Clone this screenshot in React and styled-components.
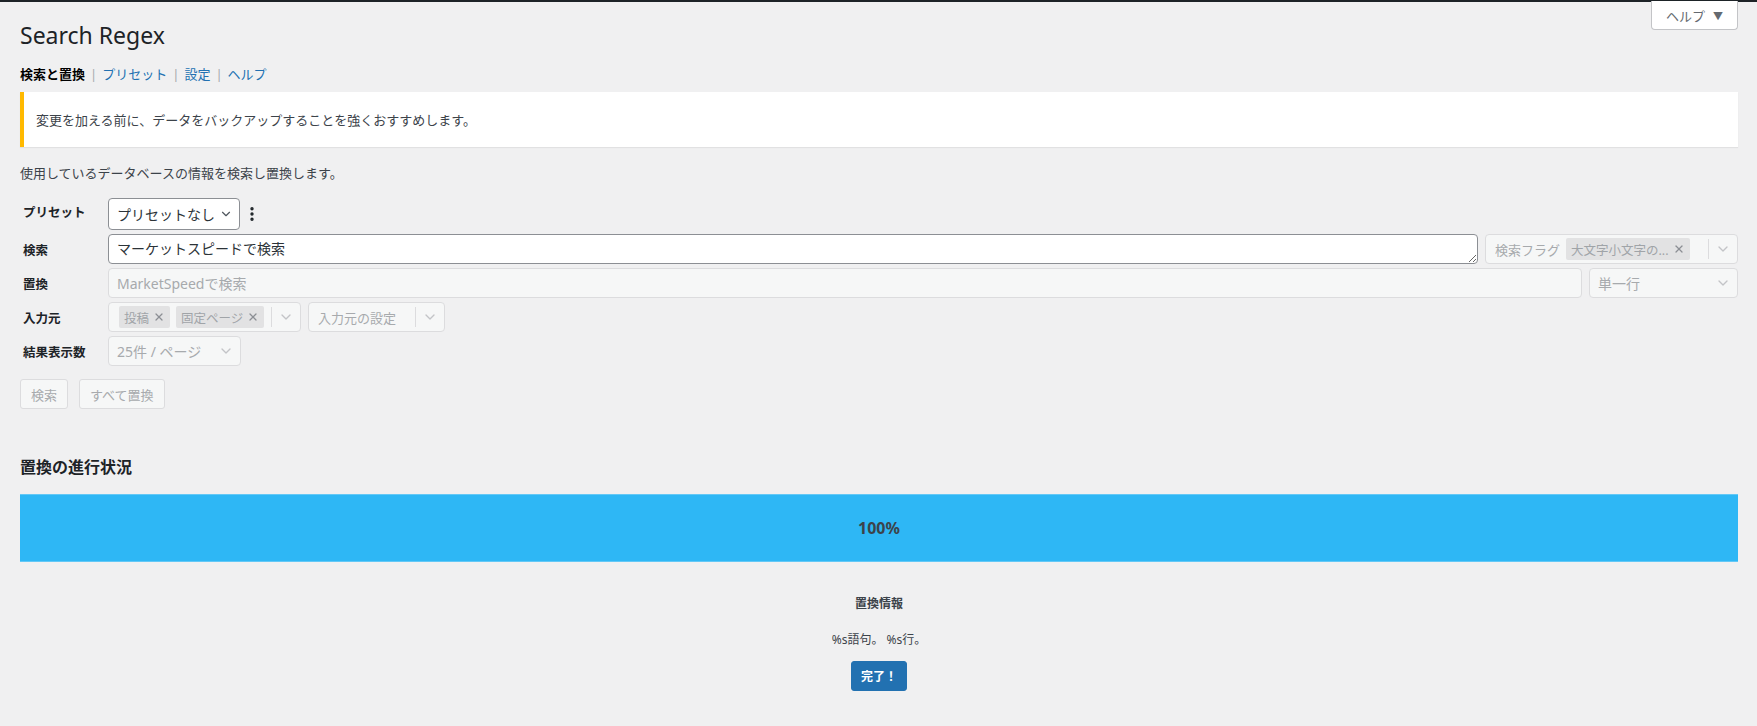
import React from "react";
import styled, { createGlobalStyle } from "styled-components";
import { ChevronDown, X, EllipsisVertical } from "lucide-react";

const GlobalStyle = createGlobalStyle`
  html, body {
    margin: 0;
    padding: 0;
    background: #f0f0f1;
    font-family: "Noto Sans", "Noto Sans CJK JP", sans-serif;
    color: #3c434a;
    font-size: 13px;
  }
  * { box-sizing: border-box; }
`;

const TopBar = styled.div`
  height: 2px;
  background: #1d2327;
`;

const Page = styled.div`
  padding: 0 19px 40px 20px;
`;

const Header = styled.div`
  display: flex;
  justify-content: space-between;
  align-items: flex-start;
`;

const Title = styled.h1`
  margin: 19px 0 0;
  font-size: 23px;
  font-weight: 400;
  line-height: 29px;
  color: #1d2327;
`;

const HelpTab = styled.button`
  display: flex;
  align-items: center;
  justify-content: center;
  gap: 8px;
  height: 29px;
  width: 87px;
  margin-top: -1px;
  padding: 0;
  background: #fff;
  border: 1px solid #c3c4c7;
  border-top: none;
  border-radius: 0 0 4px 4px;
  font-family: inherit;
  font-size: 13px;
  color: #646970;
  white-space: nowrap;
  span.arrow { font-size: 10px; color: #646970; }
`;

const SubNav = styled.div`
  display: flex;
  align-items: center;
  gap: 5px;
  margin-top: 14px;
  line-height: 20px;
  font-size: 13px;
`;

const NavItem = styled.a`
  color: ${(p) => (p.$current ? "#000" : "#2271b1")};
  font-weight: ${(p) => (p.$current ? 600 : 400)};
  text-decoration: none;
`;

const Sep = styled.span`
  color: #a7aaad;
`;

const Notice = styled.div`
  margin-top: 8px;
  height: 55px;
  display: flex;
  align-items: center;
  padding: 0 12px;
  background: #fff;
  border-left: 4px solid #ffb900;
  box-shadow: 0 1px 1px rgba(0, 0, 0, 0.06);
  font-size: 13px;
  color: #3c434a;
`;

const Intro = styled.p`
  margin: 16px 0 0;
  line-height: 20px;
  font-size: 13px;
`;

const Form = styled.div`
  margin-top: 15px;
  display: flex;
  flex-direction: column;
  gap: 4px;
`;

const Row = styled.div`
  display: flex;
  align-items: center;
  gap: 7px;
`;

const Label = styled.div`
  width: 81px;
  padding-left: 3px;
  flex-shrink: 0;
  font-weight: 700;
  font-size: 12.5px;
  color: #1d2327;
  align-self: ${(p) => (p.$top ? "flex-start" : "center")};
  margin-top: ${(p) => (p.$top ? "4px" : "0")};
`;

const Select = styled.div`
  display: flex;
  align-items: center;
  justify-content: space-between;
  height: ${(p) => p.$h || 30}px;
  width: ${(p) => (p.$w ? p.$w + "px" : "auto")};
  padding: 0 6px 0 8px;
  border: 1px solid ${(p) => (p.$active ? "#8c8f94" : "#dcdcde")};
  border-radius: 4px;
  background: ${(p) => (p.$active ? "#fff" : "#f6f7f7")};
  color: ${(p) => (p.$active ? "#2c3338" : "#a7aaad")};
  font-size: 14px;
  white-space: nowrap;
`;

const Kebab = styled.div`
  display: flex;
  align-items: center;
  margin-left: -4px;
  color: #1d2327;
`;

const SearchBox = styled.textarea`
  flex: 1;
  height: 30px;
  min-height: 30px;
  padding: 3px 8px;
  border: 1px solid #8c8f94;
  border-radius: 4px;
  background: #fff;
  color: #2c3338;
  font-family: inherit;
  font-size: 14px;
  line-height: 22px;
  resize: vertical;
  overflow: hidden;
  outline: none;
`;

const Replace = styled.div`
  flex: 1;
  height: 30px;
  display: flex;
  align-items: center;
  padding: 0 8px;
  border: 1px solid #dcdcde;
  border-radius: 4px;
  background: #f6f7f7;
  color: #a7aaad;
  font-size: 14px;
`;

const Multi = styled.div`
  display: flex;
  align-items: center;
  height: 30px;
  width: ${(p) => p.$w}px;
  padding-left: ${(p) => (p.$plain ? 9 : 10)}px;
  border: 1px solid #dcdcde;
  border-radius: 4px;
  background: #f6f7f7;
  color: #a7aaad;
  font-size: 13px;
  white-space: nowrap;
`;

const MultiBody = styled.div`
  flex: 1;
  display: flex;
  align-items: center;
  gap: 6px;
  overflow: hidden;
`;

const Tag = styled.span`
  display: inline-flex;
  align-items: center;
  gap: 4px;
  height: 22px;
  padding: 0 5px;
  border-radius: 2px;
  background: #e2e2e3;
  color: #a0a4a8;
  font-size: 12.5px;
  width: ${(p) => (p.$w ? p.$w + "px" : "auto")};
  justify-content: space-between;
  svg { color: #8c8f94; }
`;

const Divider = styled.span`
  width: 1px;
  height: 20px;
  background: #dcdcde;
`;

const Caret = styled.span`
  width: 28px;
  display: flex;
  justify-content: center;
  color: #c3c4c7;
`;

const Buttons = styled.div`
  display: flex;
  gap: 11px;
  margin-top: 13px;
`;

const GhostButton = styled.button`
  height: 30px;
  padding: 0 10px;
  border: 1px solid #dcdcde;
  border-radius: 3px;
  background: #f6f7f7;
  color: #a7aaad;
  font-family: inherit;
  font-size: 13px;
`;

const SectionTitle = styled.h2`
  margin: 47px 0 0;
  font-size: 16px;
  font-weight: 700;
  line-height: 22px;
  color: #1d2327;
`;

const Progress = styled.div`
  margin-top: 16px;
  height: 68px;
  display: flex;
  align-items: center;
  justify-content: center;
  background: #2eb7f5;
  border-top: 1px solid #63c8f6;
  border-bottom: 1px solid #63c8f6;
  font-size: 16px;
  font-weight: 700;
  color: #3c434a;
`;

const Info = styled.div`
  display: flex;
  flex-direction: column;
  align-items: center;
  margin-top: 33px;
`;

const InfoTitle = styled.div`
  font-weight: 700;
  font-size: 12px;
  line-height: 18px;
  color: #3c434a;
`;

const InfoText = styled.div`
  margin-top: 18px;
  font-size: 12px;
  line-height: 18px;
`;

const PrimaryButton = styled.button`
  margin-top: 12px;
  height: 30px;
  width: 56px;
  border: 1px solid #2271b1;
  border-radius: 3px;
  background: #2271b1;
  color: #fff;
  font-family: inherit;
  font-size: 12px;
  font-weight: 600;
`;

export default function App() {
  return (
    <>
      <GlobalStyle />
      <TopBar />
      <Page>
        <Header>
          <Title>Search Regex</Title>
          <HelpTab>
            ヘルプ <span className="arrow">▼</span>
          </HelpTab>
        </Header>

        <SubNav>
          <NavItem $current>検索と置換</NavItem>
          <Sep>|</Sep>
          <NavItem href="#">プリセット</NavItem>
          <Sep>|</Sep>
          <NavItem href="#">設定</NavItem>
          <Sep>|</Sep>
          <NavItem href="#">ヘルプ</NavItem>
        </SubNav>

        <Notice>変更を加える前に、データをバックアップすることを強くおすすめします。</Notice>

        <Intro>使用しているデータベースの情報を検索し置換します。</Intro>

        <Form>
          <Row>
            <Label $top>プリセット</Label>
            <Select $active $w={132} $h={32}>
              プリセットなし
              <ChevronDown size={14} strokeWidth={2} color="#50575e" />
            </Select>
            <Kebab>
              <EllipsisVertical size={18} strokeWidth={2.5} />
            </Kebab>
          </Row>

          <Row>
            <Label>検索</Label>
            <SearchBox rows={1} defaultValue="マーケットスピードで検索" />
            <Multi $w={253} $plain>
              <MultiBody>
                <span>検索フラグ</span>
                <Tag $w={124}>
                  大文字小文字の...
                  <X size={12} strokeWidth={2.5} />
                </Tag>
              </MultiBody>
              <Divider />
              <Caret>
                <ChevronDown size={16} strokeWidth={2} />
              </Caret>
            </Multi>
          </Row>

          <Row>
            <Label>置換</Label>
            <Replace>MarketSpeedで検索</Replace>
            <Select $w={149}>
              単一行
              <ChevronDown size={16} strokeWidth={2} color="#c3c4c7" />
            </Select>
          </Row>

          <Row>
            <Label>入力元</Label>
            <Multi $w={193}>
              <MultiBody>
                <Tag>
                  投稿 <X size={12} strokeWidth={2.5} />
                </Tag>
                <Tag>
                  固定ページ <X size={12} strokeWidth={2.5} />
                </Tag>
              </MultiBody>
              <Divider />
              <Caret>
                <ChevronDown size={16} strokeWidth={2} />
              </Caret>
            </Multi>
            <Multi $w={137} $plain>
              <MultiBody>入力元の設定</MultiBody>
              <Divider />
              <Caret>
                <ChevronDown size={16} strokeWidth={2} />
              </Caret>
            </Multi>
          </Row>

          <Row>
            <Label>結果表示数</Label>
            <Select $w={133}>
              25件 / ページ
              <ChevronDown size={16} strokeWidth={2} color="#c3c4c7" />
            </Select>
          </Row>
        </Form>

        <Buttons>
          <GhostButton>検索</GhostButton>
          <GhostButton>すべて置換</GhostButton>
        </Buttons>

        <SectionTitle>置換の進行状況</SectionTitle>
        <Progress>100%</Progress>

        <Info>
          <InfoTitle>置換情報</InfoTitle>
          <InfoText>%s語句。 %s行。</InfoText>
          <PrimaryButton>完了！</PrimaryButton>
        </Info>
      </Page>
    </>
  );
}
